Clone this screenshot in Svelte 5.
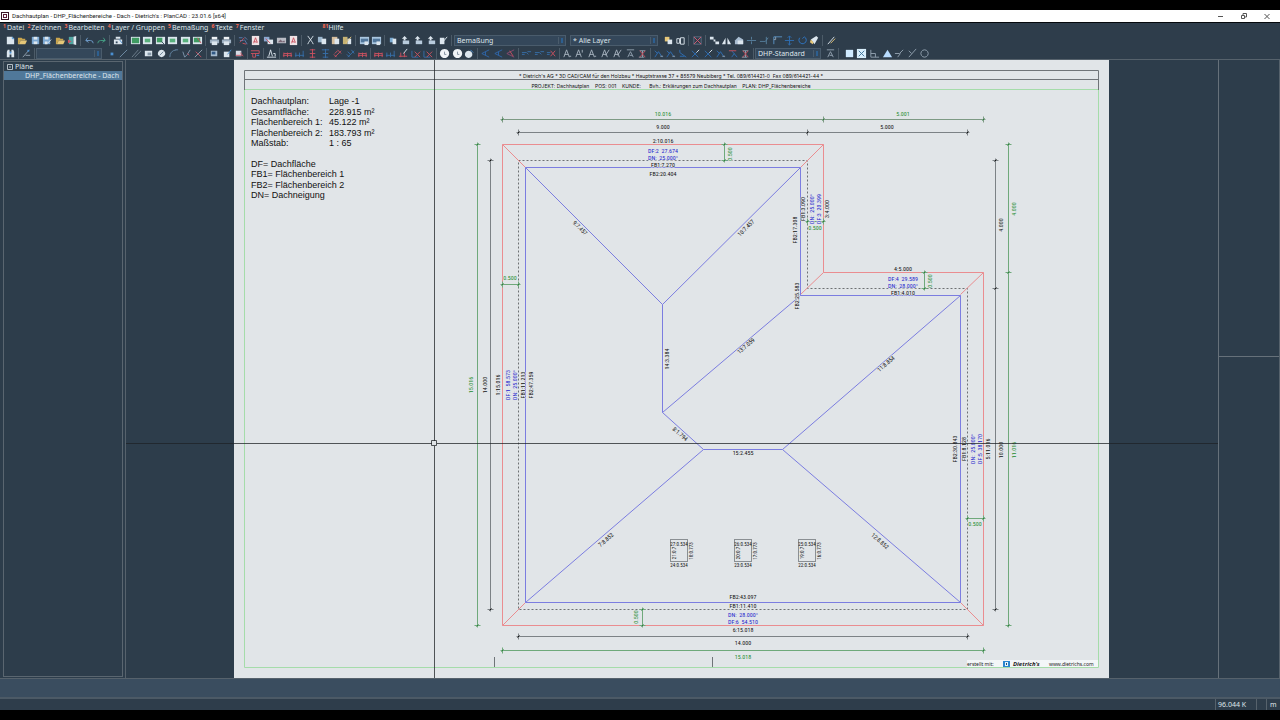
<script>
	const W = "#dce6ee";
	const B = "#4b8fd0";
	const Y = "#e6c778";
	const G = "#58b07c";
	const R = "#c9515f";
	const N = "#94a3b1";
	const D = "#34495e";

	// every icon is a list of [path, fill, stroke] on a 12x12 grid
	const icons = {
		new: [["M2 2h6l2 2v6H2z", W], ["M8 2v2h2", null, B]],
		open: [["M1 3h4l1 1h3v2H4l-2 4H1z", "#c9a54e"], ["M4 6h7l-2 4H2z", Y]],
		save: [["M2 2h8v8H2z", "#7aa7d2"], ["M4 2h4v3H4z", W], ["M4 7h4v3H4z", W]],
		saveAs: [["M1 2h8v8H1z", "#7aa7d2"], ["M3 2h4v3H3zM3 7h3v3H3z", W], ["M6 9l4-4", null, W]],
		exit: [["M2 2h5v8H2z", "#4fa3a0"], ["M7 2l3-1v10l-3-1z", W], ["M1 5l4 2-4 2z", R]],
		undo: [["M2 6h5q3 0 3 3M4 3L2 6l3 2", null, "#6f9ccc"]],
		redo: [["M10 6H5q-3 0-3 3M8 3l2 3-3 2", null, "#45a085"]],
		find: [["M1 5h9v5H1zM3 2h5v2H3z", W], ["M3 7h2v2H3z", D], ["M7 5l3 4", null, B]],
		binoculars: [["M2 4l1-2h2v2h2V2h2l1 2v6H7V7H5v3H2z", W], ["M5 4h2v2H5z", B]],
		green: [["M1 2h10v8H1z", W], ["M2 3h8v6H2z", "#3f9b62"]],
		greenLight: [["M1 2h10v8H1z", W], ["M3 4h6v4H3z", G]],
		greenZoom: [["M1 2h10v8H1z", W], ["M2 3h6v5H2z", "#3f9b62"], ["M7 7l3 3", null, D]],
		greenRed: [["M1 2h10v8H1z", W], ["M2 3h7v5H2z", "#3f9b62"], ["M6 3l4 6", null, R]],
		print: [["M3 2h6v3H3z", "#eef2f5"], ["M1 5h10v4H1z", "#9db0c2"], ["M3 7h6v4H3z", W]],
		link: [["M1 3h4M2 6h4M7 2l3 3M7 5l3 5", null, "#5f80b5"], ["M2 8l5-5M5 9l4 1", null, R]],
		pdf: [["M2 1h8v10H2z", "#eee3e6"], ["M4 9l2-6 2 5-4-1", null, R]],
		image: [["M1 3h10v6H1z", "#b9bcc5"], ["M2 8l3-3 2 2 2-1 1 2z", "#7b6877"]],
		linkImage: [["M1 2h6v5H1z", "#8ba8d0"], ["M5 5h6v5H5z", W], ["M3 4l5 5", null, R]],
		cut: [["M3 1l5 7M9 1L4 8M3 10l1-2M9 10L8 8", null, W]],
		copy: [["M1 2h5v6H1z", "#9bb6cc"], ["M5 4h5v6H5z", W]],
		paste: [["M2 2h6v8H2z", "#d5bd9c"], ["M5 4h5v6H5z", W]],
		pasteBrush: [["M1 2h5v8H1z", "#c6b374"], ["M6 4h4v6H6z", W], ["M4 9l6-7", null, Y]],
		window: [["M1 2h10v8H1z", "#a9c6e0"], ["M2 4h8v4H2z", "#51779c"], ["M6 7h4v4H6z", W]],
		layers: [["M2 3h4v5H2z", "#7aa9d0"], ["M5 4h4v6H5z", W]],
		layerUp: [["M5 1l3 3H6v2H4V4H2z", W], ["M3 6h7v4H3z", "#b8cbdc"]],
		layerEdit: [["M2 3h5v7H2z", W], ["M5 8l5-6", null, W]],
		hand: [["M2 2h5v5H2z", Y], ["M5 5h5v5H5z", W]],
		frame: [["M2 4h3v5H2zM6 3h4v7H6z", null, W]],
		delBox: [["M2 2h8v8H2z", null, "#5f7083"], ["M2 2l8 8M10 2l-8 8", null, "#d65c74"]],
		dots: [["M1 2h4v3H1zM5 5h2v2H5zM7 7h4v3H7z", W]],
		mirror: [["M5 3v7H1zM7 3v7h4z", W]],
		house: [["M1 6l4-4 5 3v5H1z", "#a9bdd1"], ["M4 6h6v4H4z", W]],
		trim: [["M1 6h10M6 2v3M6 7v3", null, "#58809f"]],
		extend: [["M1 7h6l3-4M8 2v8", null, "#58809f"]],
		corner: [["M2 10V2h9", null, "#5b93c5"], ["M2 5h2V2", null, N]],
		move: [["M6 1v10M1 6h10M4 3l2-2 2 2M4 9l2 2 2-2", null, "#2f6db0"]],
		rotate: [["M3 3a4 4 0 1 0 5-1M8 2l-2 2", null, "#2f78c8"]],
		clean: [["M2 5l6-4 2 2-4 7z", W], ["M2 5l3 3-1 2-3-2z", Y]],
		pencil: [["M2 10l7-8", null, W], ["M5 9l5-5", null, Y]],
		picker: [["M2 10l7-8M5 8h5", null, N], ["M7 2h2v2H7z", B]],
		point: [["M5 5h3v3H5z", B]],
		line: [["M2 10l8-8", null, "#7390aa"]],
		parallel: [["M1 10l7-8M4 10l7-7", null, "#71818f"]],
		rect: [["M2 3h8v6H2z", W], ["M5 5h4v3H5z", "#889aaa"]],
		circle: [["M6 2a4 4 0 1 0 .1 0z", "#dbe5ed"], ["M4 8l4-4", null, "#6a8092"]],
		arc: [["M2 10Q2 3 9 2M8 2h3", null, "#6384a2"]],
		poly: [["M2 4l2 6 3-3 3-5", null, "#8098ae"], ["M7 6l2 2", null, R]],
		redLine: [["M2 10l8-8", null, N], ["M3 4l6 6", null, R]],
		attr: [["M2 3h7v6H2z", "#a5bbd0"], ["M3 4h4v3H3z", "#315985"]],
		attrPlus: [["M2 4h6v6H2z", W], ["M6 7l4-5", null, B]],
		attrBack: [["M2 3h6v6H2z", "#d5dbe6"], ["M2 8h6M7 5l3 4", null, R]],
		redDims: [["M1 3h9v3H1M3 6v4h3V6", null, R], ["M7 8h3", null, B]],
		scale: [["M3 9l2-7 2 7M1 10h10M8 6h2v3", null, W]],
		dimH: [["M1 8h10M2 5v5M6 5v5M10 5v5M2 6h8", null, R]],
		dimHBlue: [["M1 8h10M2 5v5M10 3v7M6 5v5", null, "#376fa9"]],
		dimV: [["M6 1v10M3 2h6M3 6h6M3 10h6", null, R]],
		dimVBlue: [["M6 1v10M2 2h8M3 6h6M3 10h6", null, "#376fa9"]],
		dimDiag: [["M3 10l7-7M2 7l3 3M6 2l4 4M3 6l3-3", null, R]],
		dimDiagBlue: [["M3 10l7-7M2 7l3 3M7 2l3 4M3 4l3 3", null, "#376fa9"]],
		dimEdit: [["M1 9h9M3 5v5M7 5v5", null, R], ["M6 6l4-5", null, W]],
		dimDel: [["M1 3v7h7", null, "#376fa9"], ["M4 4l6 6M10 4l-6 6", null, R]],
		ball: [["M6 1a5 5 0 1 0 .1 0z", "#f0f4f7"], ["M6 4v3h2", null, "#8291a0"]],
		ballEdit: [["M5 3a4 4 0 1 0 .1 0z", W], ["M7 2l3 3", null, B]],
		angle: [["M10 2L2 6l8 4M6 4v4", null, "#2e66aa"]],
		angleRed: [["M10 2L2 6l8 4", null, "#8b4a72"], ["M5 3l4 6", null, R]],
		chain: [["M1 5h5l2 2M1 7h3M7 4h4", null, "#376fa9"]],
		chainRed: [["M1 5h4M1 7h3", null, "#376fa9"], ["M5 3l5 6M10 3L5 9", null, R]],
		text: [["M2 10l3-8 3 8M3 7h4M8 9h2", null, "#a7b4c0"]],
		textUp: [["M2 10l3-8 3 8M3 7h4M9 2v3", null, "#a7b4c0"]],
		textEdit: [["M2 10l3-8 3 8M3 7h4M6 8l4-6", null, "#a7b4c0"]],
		textDel: [["M3 3h6M6 3v7M2 10h6", null, N], ["M3 3l6 7M9 3l-6 7", null, R]],
		mark: [["M2 10l4-6 4 6M2 3l3 3", null, "#2f6fb5"], ["M8 9h3", null, N]],
		markEdit: [["M2 10l6-6M2 3l7 7", null, "#2f6fb5"], ["M7 5l3-3", null, W]],
		markDown: [["M2 2v3l7 5M2 9h5", null, "#2f6fb5"]],
		markRed: [["M4 3l6 7M4 10l3-4", null, "#2f6fb5"], ["M1 3h8", null, R]],
		overline: [["M2 2h8M3 10l3-6 3 6M5 8h3", null, N]],
		square: [["M2 2h8v8H2z", "#cfeaff"]],
		crossSquare: [["M1 1h10v10H1z", "#d9effc"], ["M3 3l6 6M9 3l-6 6", null, "#3c7198"]],
		ortho: [["M2 2v8h9M2 6h5v4", null, N]],
		triangle: [["M6 2l5 8H1z", "#b8dcff"]],
		snap: [["M1 6h5l4-4M4 10l3-4", null, N]],
		snapY: [["M2 3l3 3M2 10l8-9", null, N]],
		ring: [["M6 2a4 4 0 1 0 .1 0z", null, N]]
	};

	const menu = [
		["1", "Datei"],
		["2", "Zeichnen"],
		["3", "Bearbeiten"],
		["4", "Layer / Gruppen"],
		["5", "Bemaßung"],
		["6", "Texte"],
		["7", "Fenster"]
	];

	// a string is a group of icons, an object is a drop-down
	const toolbars = [
		[
			"new open save saveAs open exit",
			"undo redo",
			"find",
			"green greenLight greenZoom greenLight greenLight greenRed",
			"print print",
			"link pdf linkImage image pdf",
			"cut copy paste pasteBrush",
			"window window",
			"layers layerUp layerUp layerUp layerEdit",
			{ label: "Stil", value: "Bemaßung", size: "wide" },
			{ label: "Layer", value: "* Alle Layer", size: "medium" },
			"hand frame",
			"delBox",
			"dots mirror house trim extend corner move rotate clean",
			"pencil"
		],
		[
			"binoculars",
			"picker",
			{ label: "Auswahl", value: "", size: "narrow" },
			"point line parallel rect circle arc poly redLine",
			"attr attrPlus attrBack",
			"redDims",
			"scale",
			"dimH dimHBlue dimV dimVBlue dimDiag dimDiagBlue dimH",
			"dimH dimHBlue dimEdit dimDel dimDel",
			"ball ball ballEdit",
			"angle angle angleRed",
			"chain chain chainRed",
			"text textUp text textEdit textEdit overline textDel",
			"mark mark markDown markEdit markEdit mark markRed textDel",
			{ label: "Textstil", value: "DHP-Standard", size: "narrow" },
			"overline",
			"square crossSquare ortho triangle snap snapY ring"
		]
	];

	const legend = [
		[104, "Dachhautplan:", "Lage -1"],
		[115, "Gesamtfläche:", "228.915 m²"],
		[125, "Flächenbereich 1:", "45.122 m²"],
		[136, "Flächenbereich 2:", "183.793 m²"],
		[146, "Maßstab:", "1 : 65"],
		[167, "DF= Dachfläche"],
		[177, "FB1= Flächenbereich 1"],
		[188, "FB2= Flächenbereich 2"],
		[198, "DN= Dachneigung"]
	];

	// dimension chains: direction, fixed coordinate, stops, colour
	const chains = [
		["h", 119.5, [502.5, 823.5, 983.5], "mixed"],
		["h", 132.5, [518.5, 807.5, 967.5], "black"],
		["h", 636.5, [518.5, 967.5], "black"],
		["h", 650.5, [502.5, 983.5], "green"],
		["v", 477.5, [144.5, 625.5], "green"],
		["v", 490.5, [160.5, 609.5], "black"],
		["v", 995.5, [160.5, 288.5, 609.5], "black"],
		["v", 1008.5, [144.5, 272.5, 625.5], "green"],
		["v", 724.5, [144.5, 160.5], "green"],
		["v", 924.5, [272.5, 288.5], "green"],
		["v", 642.5, [609.5, 625.5], "green"],
		["h", 284.5, [502.5, 518.5], "green"],
		["h", 221.5, [807.5, 823.5], "green"],
		["h", 518.5, [967.5, 983.5], "green"]
	];

	// text, centre x, centre y, rotation, colour
	const labels = [
		["10.016", 663, 114, 0, "green"],
		["5.001", 903, 114, 0, "green"],
		["9.000", 663, 127, 0, "black"],
		["5.000", 887, 127, 0, "black"],
		["2:10.016", 663, 141, 0, "black"],
		["DF:2  27.674", 663, 151, 0, "blue"],
		["DN:  25.000°", 663, 158, 0, "blue"],
		["FB1:7.270", 663, 165, 0, "black"],
		["FB2:20.404", 663, 174, 0, "black"],
		["0.500", 730, 154, -90, "green"],
		["FB2:17.308", 795, 230, -90, "black"],
		["FB1:3.090", 803, 209, -90, "black"],
		["DN:  25.000°", 812, 209, -90, "blue"],
		["DF:3  20.399", 819, 209, -90, "blue"],
		["3:4.000", 827, 209, -90, "black"],
		["0.500", 815, 228, 0, "green"],
		["FB2:25.583", 797, 296, -90, "black"],
		["4:5.000", 903, 269, 0, "black"],
		["DF:4  29.589", 903, 279, 0, "blue"],
		["DN:  28.000°", 903, 286, 0, "blue"],
		["FB1:4.010", 903, 293, 0, "black"],
		["0.500", 930, 281, -90, "green"],
		["4.000", 1001, 225, -90, "black"],
		["4.000", 1014, 209, -90, "green"],
		["10.000", 1001, 450, -90, "black"],
		["11.016", 1014, 450, -90, "green"],
		["0.500", 510, 278, 0, "green"],
		["15.016", 471, 385, -90, "green"],
		["14.000", 485, 385, -90, "black"],
		["1:15.016", 498, 385, -90, "black"],
		["DF:1  58.573", 508, 385, -90, "blue"],
		["DN:  25.000°", 515, 385, -90, "blue"],
		["FB1:11.213", 523, 385, -90, "black"],
		["FB2:47.359", 531, 385, -90, "black"],
		["FB2:30.843", 955, 449, -90, "black"],
		["FB1:8.128", 964, 449, -90, "black"],
		["DN:  25.000°", 973, 449, -90, "blue"],
		["DF:5  38.170", 980, 449, -90, "blue"],
		["5:11.016", 988, 449, -90, "black"],
		["0.500", 975, 524, 0, "green"],
		["9:7.457", 580, 228, 45, "black"],
		["10:7.457", 746, 228, -45, "black"],
		["13:7.059", 746, 346, -41, "black"],
		["11:8.854", 886, 364, -41, "black"],
		["8:1.794", 680, 434, 41, "black"],
		["7:8.852", 606, 540, -41, "black"],
		["12:8.852", 880, 541, 41, "black"],
		["14:3.384", 667, 359, -90, "black"],
		["15:2.455", 743, 453, 0, "black"],
		["FB2:43.097", 743, 597, 0, "black"],
		["FB1:11.410", 743, 606, 0, "black"],
		["DN:  28.000°", 743, 615, 0, "blue"],
		["DF:6  54.510", 743, 622, 0, "blue"],
		["6:15.018", 743, 630, 0, "black"],
		["0.500", 636, 617, -90, "green"],
		["14.000", 743, 643, 0, "black"],
		["15.018", 743, 657, 0, "green"]
	];

	const roofWindows = [
		[679, "27:0.534", "21:0.7", "18:0.773", "24:0.534"],
		[743, "26:0.534", "20:0.7", "17:0.773", "23:0.534"],
		[807, "25:0.534", "19:0.7", "16:0.773", "22:0.534"]
	];

	function chainPath([dir, at, stops]) {
		const first = stops[0];
		const last = stops[stops.length - 1];
		if (dir == "h") {
			return `M${first - 2} ${at}H${last + 2}` + stops.map((s) => `M${s} ${at - 3}v6`).join("");
		}
		return `M${at} ${first - 2}V${last + 2}` + stops.map((s) => `M${at - 3} ${s}h6`).join("");
	}

	function tickPath([dir, at, stops]) {
		return stops
			.map((s) => (dir == "h" ? `M${s - 1} ${at + 1}l2 -2` : `M${at - 1} ${s + 1}l2 -2`))
			.join("");
	}
</script>

{#snippet label(text, x, y, angle, color)}
	<text class="dim {color}" transform="translate({x} {y}) rotate({angle})" y="2">{text}</text>
{/snippet}

<div class="screen">
	<header class="titlebar">
		<svg class="appicon" viewBox="0 0 8 8" aria-hidden="true">
			<path d="M0 0h8v8H0z" fill="#3a1524" />
			<path d="M1 1h6v6H1z" fill="#fff" />
			<path d="M2 2h4v4H2z" fill="#5d1f38" />
			<path d="M3 3h2v2H3z" fill="#fff" />
		</svg>
		<span class="title">Dachhautplan - DHP_Flächenbereiche - Dach - Dietrich's : PlanCAD : 23.01.6 [x64]</span>
		<button class="winbtn" aria-label="Minimieren">
			<svg viewBox="0 0 8 8"><path d="M1 4.5h5" /></svg>
		</button>
		<button class="winbtn" aria-label="Verkleinern">
			<svg viewBox="0 0 8 8"><path d="M1.5 3.5h3v3h-3zM3 3V1.5h3.5V5H5" /></svg>
		</button>
		<button class="winbtn" aria-label="Schließen">
			<svg viewBox="0 0 8 8"><path d="M1.5 2l5 5M6.5 2l-5 5" /></svg>
		</button>
	</header>

	<nav class="menu">
		{#each menu as [key, name]}
			<button class="menuitem"><span class="key">{key}</span>{name}</button>
		{/each}
		<button class="menuitem help"><span class="key">81</span>Hilfe</button>
	</nav>

	{#each toolbars as items}
		<div class="toolbar">
			{#each items as item}
				{#if typeof item == "string"}
					{@const names = item.split(" ")}
					<div class="group" style="width: {Math.round(names.length * 12.5)}px">
						{#each names as name}
							<button class="tool" aria-label={name}>
								<svg viewBox="0 0 12 12">
									{#each icons[name] as [d, fill, stroke]}
										<path {d} fill={fill ?? "none"} stroke={stroke ?? "none"} />
									{/each}
								</svg>
							</button>
						{/each}
					</div>
				{:else}
					<select class="combo {item.size}" aria-label={item.label}>
						<option>{item.value}</option>
					</select>
				{/if}
			{/each}
		</div>
	{/each}

	<main class="workspace">
		<aside class="tree">
			<div class="treebox">
				<button class="node">
					<svg viewBox="0 0 6 6"><path d="M.5 .5h5v5h-5zM2 3h2" /></svg>
					Pläne
				</button>
				<button class="leaf">DHP_Flächenbereiche - Dach</button>
			</div>
		</aside>

		<section class="canvas">
			<svg viewBox="126 60 1092 618" role="img" aria-label="Dachhautplan">
				<rect x="234" y="60" width="875" height="618" fill="#e1e5e8" />

				<!-- sheet frame -->
				<path class="sheet" d="M244.5 90V667.5H1098.5V90M244.5 89.5H1098.5" />
				<path class="frame" d="M244.5 90V70.5H1098.5V90M244.5 79.5H1098.5" />
				<path class="frame" d="M494.5 657v10M712.5 657v10" />
				<text class="head" x="671" y="78">* Dietrich's AG * 3D CAD/CAM für den Holzbau * Hauptstrasse 37 * 85579 Neubiberg * Tel. 089/614421-0&nbsp; Fax 089/614421-44 *</text>
				<text class="head" x="671" y="88">PROJEKT: Dachhautplan&nbsp;&nbsp;&nbsp; POS: 001&nbsp;&nbsp;&nbsp; KUNDE:&nbsp;&nbsp;&nbsp;&nbsp;&nbsp; Bvh.: Erklärungen zum Dachhautplan&nbsp;&nbsp;&nbsp; PLAN: DHP_Flächenbereiche</text>

				{#each legend as [y, name, value]}
					<text class="legend" x="251" {y}>{name}</text>
					{#if value}
						<text class="legend" x="329" {y}>{value}</text>
					{/if}
				{/each}

				<!-- eaves, wall line and roof areas -->
				<path class="wall" d="M518.5 160.5H807.5V288.5H967.5V609.5H518.5z" />
				<path class="eaves" d="M502.5 144.5H823.5V272.5H983.5V625.5H502.5z" />
				<path class="eaves" d="M502.5 144.5l23 23M823.5 144.5l-23 23M823.5 272.5l-23 22M983.5 272.5l-23 22M983.5 625.5l-23-23M502.5 625.5l23-23" />
				<path class="roof" d="M525.5 167.5H800.5V295.5H960.5V602.5H525.5z" />
				<path class="roof" d="M525.5 167.5L662.5 304.5L800.5 167.5M662.5 304.5V412.5L703.5 449.5H782.5L960.5 295.5M662.5 412.5L800.5 295.5M703.5 449.5L525.5 602.5M782.5 449.5L960.5 602.5" />

				{#each chains as chain}
					<path class="chain {chain[3]}" d={chainPath(chain)} />
					<path class="tick {chain[3]}" d={tickPath(chain)} />
				{/each}

				<g class="windows">
					{#each roofWindows as [x, top, left, right, bottom]}
						<rect x={x - 8.5} y="539.5" width="17" height="22" />
						{@render label(left, x - 5, 553, -90, "black")}
						{@render label(right, x + 12, 551, -90, "black")}
						{@render label(top, x, 544, 0, "black")}
						{@render label(bottom, x, 565, 0, "black")}
					{/each}
				</g>

				{#each labels as [text, x, y, angle, color]}
					{@render label(text, x, y, angle, color)}
				{/each}

				<!-- stamp -->
				<rect x="967" y="660" width="131" height="7" fill="#f3f6f8" />
				<text class="stamp" x="967" y="666">erstellt mit:</text>
				<path d="M1003 661h7v6h-7z" fill="#2b86cf" />
				<path d="M1005 662h3v4h-3z" fill="#e8f3fb" />
				<path d="M1006 663h1v2h-1z" fill="#1c4f80" />
				<text class="stamp brand" x="1013" y="666">Dietrich's</text>
				<text class="stamp" x="1049" y="666">www.dietrichs.com</text>

				<!-- crosshair -->
				<path class="cross" d="M434.5 60V441M434.5 446V678M126 443.5H432M437 443.5H1218M431.5 440.5h5v5h-5z" />
			</svg>
		</section>

		<aside class="dock">
			<div class="pane"></div>
			<div class="pane lower"></div>
		</aside>
	</main>

	<div class="command"></div>
	<footer class="status">
		<span class="cell memory">96.044 K</span>
		<span class="cell spare"></span>
		<span class="cell unit">m</span>
	</footer>
</div>

<style>
	:global(body) {
		margin: 0;
		background: #000;
	}
	.screen {
		box-sizing: border-box;
		display: flex;
		flex-direction: column;
		min-height: 100vh;
		padding: 10px 0;
		font-family: "Noto Sans", sans-serif;
		font-size: 7px;
		line-height: 10px;
		color: #dfe5ea;
	}
	button {
		margin: 0;
		padding: 0;
		border: 0;
		background: none;
		color: inherit;
		font: inherit;
	}
	svg {
		display: block;
	}

	.titlebar {
		display: flex;
		align-items: center;
		height: 12px;
		padding: 0 2px 0 1px;
		border-bottom: 1px solid #05090c;
		background: #fff;
		color: #222;
	}
	.appicon {
		width: 8px;
		height: 8px;
	}
	.title {
		flex: 1;
		margin-left: 3px;
		font-family: Roboto, sans-serif;
		font-size: 6px;
		white-space: nowrap;
	}
	.winbtn {
		display: flex;
		justify-content: center;
		width: 23px;
	}
	.winbtn svg {
		width: 8px;
		height: 8px;
		fill: none;
		stroke: #555;
	}

	.menu {
		display: flex;
		gap: 2px;
		height: 11px;
		padding-left: 2px;
		background: #2e3d4b;
	}
	.menuitem {
		display: flex;
		white-space: nowrap;
	}
	.key {
		width: 5px;
		font-size: 5px;
		font-weight: bold;
		line-height: 7px;
		color: #ff6a50;
	}
	.help {
		margin-left: 56px;
	}
	.help .key {
		width: 6px;
	}

	.toolbar {
		display: flex;
		align-items: center;
		gap: 4px;
		height: 13px;
		padding-left: 4px;
		background: #2e3d4b;
	}
	.toolbar + .toolbar {
		gap: 3px;
		height: 12px;
	}
	.group {
		display: flex;
		position: relative;
		flex: none;
	}
	/* separator in the middle of the gap */
	.group::after {
		content: "";
		position: absolute;
		top: 0;
		right: -2px;
		width: 1px;
		height: 11px;
		background: #4c5b68;
	}
	.group:last-child::after {
		display: none;
	}
	.toolbar + .toolbar .group:last-child {
		margin-left: 3px;
	}
	.tool {
		display: flex;
		flex: 1;
		justify-content: center;
	}
	.tool svg {
		width: 11px;
		height: 11px;
	}
	.combo {
		box-sizing: border-box;
		flex: none;
		appearance: none;
		height: 11px;
		margin: 0;
		padding: 0 10px 0 2px;
		border: 1px solid #4a5c6c;
		border-radius: 0;
		background:
			linear-gradient(#2d5f90, #2d5f90) right 2px center / 2px 5px no-repeat,
			linear-gradient(#4a5c6c, #4a5c6c) right 6px center / 1px 7px no-repeat,
			#34475a;
		color: #dfe5ea;
		font: inherit;
		line-height: 9px;
	}
	.wide {
		width: 112px;
	}
	.medium {
		width: 88px;
	}
	.narrow {
		width: 66px;
	}

	.workspace {
		display: flex;
		flex: 1;
		border-top: 1px solid #56626c;
		border-bottom: 1px solid #56626c;
		background: #2d3d4b;
	}
	.tree {
		box-sizing: border-box;
		display: flex;
		width: 126px;
		padding: 1px 2px 1px 3px;
		border-right: 1px solid #56626c;
	}
	.treebox {
		flex: 1;
		border: 1px solid #5a6670;
	}
	.node {
		display: flex;
		align-items: center;
		gap: 2px;
		height: 9px;
		padding-left: 3px;
	}
	.node svg {
		width: 6px;
		height: 6px;
		fill: none;
		stroke: #b4bec6;
	}
	.leaf {
		display: block;
		width: 100%;
		height: 9px;
		padding-left: 21px;
		background: #50789a;
		line-height: 9px;
		text-align: left;
		white-space: nowrap;
	}
	.canvas {
		flex: 1;
		display: flex;
		min-width: 0;
	}
	.canvas svg {
		flex: 1;
		min-width: 0;
	}
	.dock {
		box-sizing: border-box;
		display: flex;
		flex-direction: column;
		width: 62px;
		border-left: 1px solid #66717a;
		border-right: 1px solid #56626c;
	}
	.pane {
		flex: 12;
	}
	.lower {
		flex: 13;
		border-top: 1px solid #66717a;
	}
	.command {
		height: 18px;
		border-bottom: 2px solid #4c5a66;
		background: #3a4d5f;
	}
	.status {
		display: flex;
		justify-content: flex-end;
		height: 11px;
		background: #2e3d4b;
	}
	.cell {
		box-sizing: border-box;
		padding-left: 2px;
		border-left: 1px solid #56626c;
		line-height: 11px;
	}
	.memory {
		width: 41px;
	}
	.spare {
		width: 10px;
	}
	.unit {
		width: 14px;
		padding-left: 3px;
	}

	.frame {
		fill: none;
		stroke: #6f7478;
	}
	.sheet {
		fill: none;
		stroke: #a5dcaa;
	}
	.eaves {
		fill: none;
		stroke: #ea8d90;
	}
	.wall {
		fill: none;
		stroke: #6d7073;
		stroke-dasharray: 2 2;
	}
	.roof {
		fill: none;
		stroke: #7b7de0;
	}
	.chain {
		fill: none;
		stroke: #7c8286;
	}
	.chain.green {
		stroke: #6fa97b;
	}
	.chain.mixed {
		stroke: #7d9a84;
	}
	.tick {
		stroke: #111;
	}
	.tick.green,
	.tick.mixed {
		stroke: #2f7d3f;
	}
	.windows rect {
		fill: none;
		stroke: #8a8f93;
	}
	.cross {
		fill: none;
		stroke: #1d2226;
		stroke-opacity: 0.75;
	}
	.dim {
		font-family: "Roboto Condensed", "Liberation Sans Narrow", "Liberation Sans", sans-serif;
		font-size: 6px;
		text-anchor: middle;
		white-space: pre;
		paint-order: stroke;
		stroke: #e1e5e8;
		stroke-width: 1px;
	}
	.windows .dim {
		font-size: 5px;
		stroke: none;
	}
	.dim.black {
		fill: #111;
	}
	.dim.blue {
		fill: #2222cc;
	}
	.dim.green {
		fill: #1d8c2e;
	}
	.head {
		font-family: Inter, "Liberation Sans", sans-serif;
		font-size: 5px;
		text-anchor: middle;
		fill: #111;
	}
	.legend {
		font-family: "Liberation Sans", sans-serif;
		font-size: 9px;
		fill: #111;
	}
	.stamp {
		font-size: 5px;
		fill: #222;
	}
	.brand {
		font-weight: bold;
		font-style: italic;
		font-size: 6px;
	}
</style>
